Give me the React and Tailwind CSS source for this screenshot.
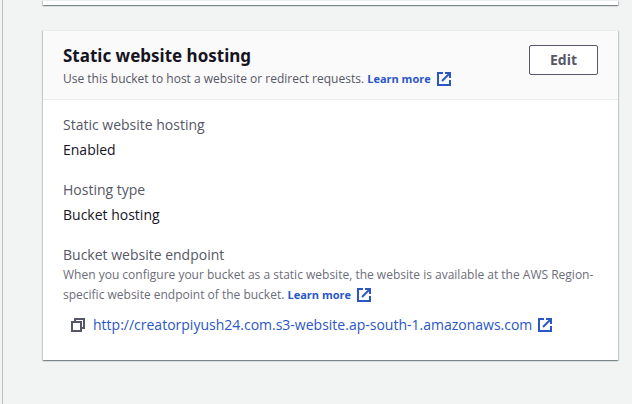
function ExternalIcon() {
  return (
    <svg
      aria-hidden="true"
      viewBox="0 0 14 14"
      className="h-3.5 w-3.5 shrink-0"
      fill="none"
      stroke="currentColor"
      strokeWidth="2"
    >
      <path d="M13 8.05V13H1V1h5" />
      <path d="M8 1h5v5" />
      <path d="M5 9l8-8" />
    </svg>
  );
}

function CopyIcon() {
  return (
    <svg
      aria-hidden="true"
      viewBox="0 0 14 14"
      className="h-3.5 w-3.5"
      fill="none"
      stroke="currentColor"
      strokeWidth="2"
    >
      <path d="M1 4h9v9H1z" />
      <path d="M4 4V1h9v9h-3" />
    </svg>
  );
}

function LearnMore() {
  return (
    <a href="#learn-more" className="inline-flex items-center gap-1.5 text-[11px] font-bold text-[#2a56c6]">
      Learn more
      <ExternalIcon />
    </a>
  );
}

function Field({ label, children }) {
  return (
    <div>
      <dt className="text-[#565766]">{label}</dt>
      <dd className="mt-[5px] text-[#16141f]">{children}</dd>
    </div>
  );
}

const cardStyle =
  "border-t border-[#eaeded] bg-white shadow-[0_1px_1px_0_rgba(0,28,36,0.3),1px_1px_1px_0_rgba(0,28,36,0.15),-1px_1px_1px_0_rgba(0,28,36,0.15)]";

export default function App() {
  return (
    <div className="flex min-h-screen bg-[#f2f3f3] pl-0.5 font-['Open_Sans','Noto_Sans',sans-serif] text-sm leading-5">
      <main className="flex min-w-0 grow flex-col gap-[25px] border-l border-[#bcc3c4] pr-3.5 pl-10">
        <section className={`h-[5px] ${cardStyle}`} />

        <section className={cardStyle}>
          <header className="flex items-start justify-between border-b border-[#eaeded] bg-[#fafafa] px-5 pt-3.5 pb-2.5">
            <div>
              <h2 className="mb-0.5 font-['Noto_Sans','Open_Sans',sans-serif] text-[17px] leading-[22px] font-bold text-[#16141f]">
                Static website hosting
              </h2>
              <p className="text-xs leading-5 text-[#565766]">
                Use this bucket to host a website or redirect requests. <LearnMore />
              </p>
            </div>
            <button
              type="button"
              className="h-[30px] rounded-xs border border-[#565766] bg-white px-5 text-sm font-bold text-[#565766]"
            >
              Edit
            </button>
          </header>

          <dl className="flex flex-col gap-5 px-5 pt-[15px] pb-[25px]">
            <Field label="Static website hosting">Enabled</Field>
            <Field label="Hosting type">Bucket hosting</Field>
            <div>
              <dt className="text-[#565766]">Bucket website endpoint</dt>
              <dd>
                <p className="text-xs leading-5 text-[#6c6d7a]">
                  When you configure your bucket as a static website, the website is available at the AWS
                  Region-specific website endpoint of the bucket. <LearnMore />
                </p>
                <div className="mt-2.5 flex items-center gap-2 pl-2">
                  <button type="button" aria-label="Copy endpoint" className="text-[#565766]">
                    <CopyIcon />
                  </button>
                  <a
                    href="http://creatorpiyush24.com.s3-website.ap-south-1.amazonaws.com"
                    className="flex items-center gap-1.5 text-[#2a56c6]"
                  >
                    http://creatorpiyush24.com.s3-website.ap-south-1.amazonaws.com
                    <ExternalIcon />
                  </a>
                </div>
              </dd>
            </div>
          </dl>
        </section>
      </main>
    </div>
  );
}
